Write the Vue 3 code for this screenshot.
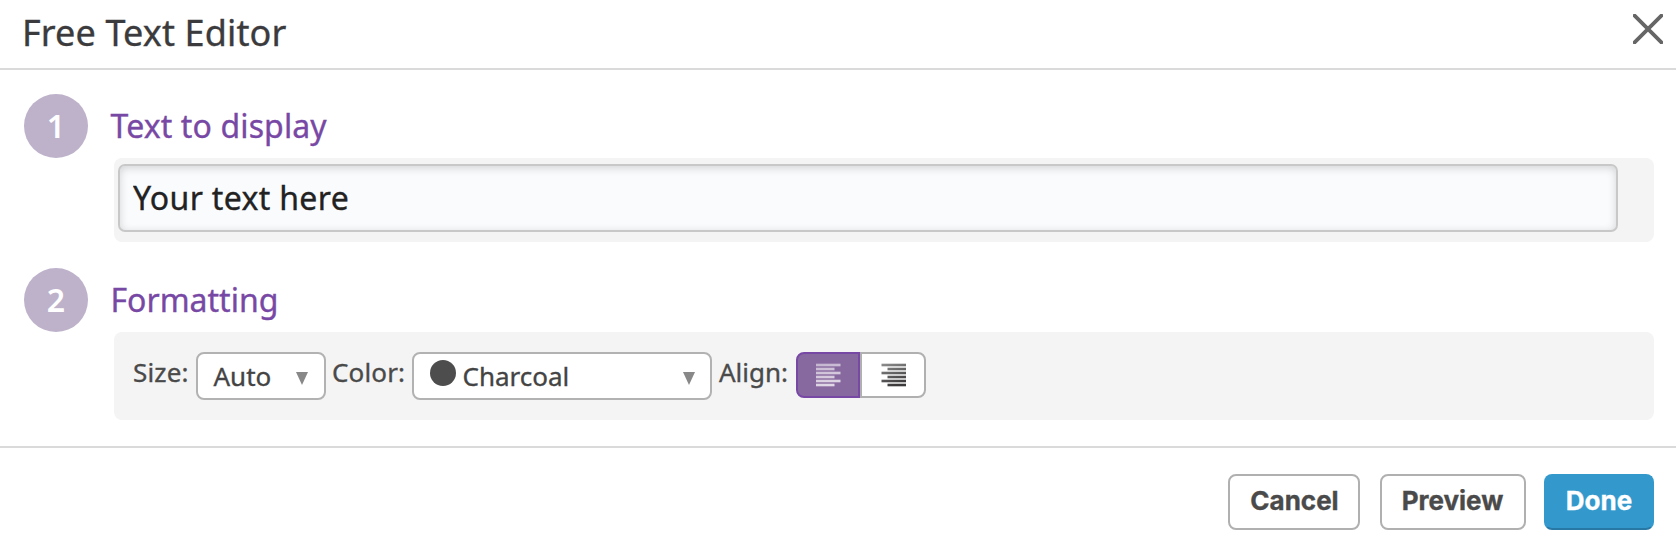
<script setup>
import { ref } from 'vue'

const text = ref('Your text here')
const align = ref('left')
const bars = [0, 4, 8, 12, 16, 20]
</script>

<template>
  <div class="dialog">
    <header class="head">
      <h1>Free Text Editor</h1>
      <button class="close" aria-label="Close">
        <svg width="30" height="30" viewBox="0 0 30 30">
          <path d="M1.6 1.6L28.4 28.4M28.4 1.6L1.6 28.4" stroke="#666" stroke-width="3.8" stroke-linecap="round" />
        </svg>
      </button>
    </header>

    <main class="body">
      <section class="step">
        <span class="num">1</span>
        <div class="content">
          <h2 class="spaced">Text to display</h2>
          <div class="panel text-panel">
            <input v-model="text" type="text" />
          </div>
        </div>
      </section>

      <section class="step second">
        <span class="num">2</span>
        <div class="content">
          <h2>Formatting</h2>
          <div class="panel format-panel">
            <span class="label size-label">Size:</span>
            <div class="select size">
              <span>Auto</span>
              <svg class="arrow" width="12" height="13" viewBox="0 0 12 13"><path d="M0 0H12L6 13Z" fill="#888" /></svg>
            </div>
            <span class="label color-label">Color:</span>
            <div class="select color">
              <i class="swatch"></i>
              <span>Charcoal</span>
              <svg class="arrow" width="12" height="13" viewBox="0 0 12 13"><path d="M0 0H12L6 13Z" fill="#888" /></svg>
            </div>
            <span class="label align-label">Align:</span>
            <div class="toggle">
              <button :class="{ on: align === 'left' }" aria-label="Left" @click="align = 'left'">
                <svg width="25" height="24" viewBox="0 0 25 24">
                  <defs>
                    <linearGradient id="light" gradientUnits="userSpaceOnUse" x1="0" y1="0" x2="4" y2="24">
                      <stop offset="0" stop-color="#c3b4cf" /><stop offset="1" stop-color="#e0d8e6" />
                    </linearGradient>
                  </defs>
                  <rect v-for="(y, i) in bars" :key="y" x="0" :y="y + 0.7" :width="i % 2 ? 18.5 : 24.5" height="2.6" fill="url(#light)" />
                </svg>
              </button>
              <button :class="{ on: align === 'right' }" aria-label="Right" @click="align = 'right'">
                <svg width="25" height="24" viewBox="0 0 25 24">
                  <defs>
                    <linearGradient id="dark" gradientUnits="userSpaceOnUse" x1="0" y1="0" x2="8" y2="24">
                      <stop offset="0" stop-color="#919191" /><stop offset="1" stop-color="#3c3a3a" />
                    </linearGradient>
                  </defs>
                  <rect v-for="(y, i) in bars" :key="y" :x="i % 2 ? 6.5 : 0.5" :y="y + 0.7" :width="i % 2 ? 18.5 : 24.5" height="2.6" fill="url(#dark)" />
                </svg>
              </button>
            </div>
          </div>
        </div>
      </section>
    </main>

    <footer class="foot">
      <button class="btn cancel">Cancel</button>
      <button class="btn preview">Preview</button>
      <button class="btn done">Done</button>
    </footer>
  </div>
</template>

<style>
body {
  margin: 0;
  background: #fff;
}
</style>

<style scoped>
.dialog,
.dialog * {
  box-sizing: border-box;
}
.dialog {
  height: 552px;
  overflow: hidden;
  background: #fff;
  font-family: "Noto Sans", sans-serif;
  color: #4a4a4a;
  -webkit-text-stroke: 0.35px currentColor;
}
h1,
h2 {
  margin: 0;
  font-weight: 400;
}
button {
  padding: 0;
  border: 0;
  background: none;
  font: inherit;
  color: inherit;
}
.head {
  display: flex;
  justify-content: space-between;
  align-items: flex-start;
  height: 70px;
  padding: 8px 13px 0 22px;
  border-bottom: 2px solid #dadada;
}
h1 {
  font-size: 36px;
  line-height: 50px;
  letter-spacing: 0.13px;
  color: #3b3b3d;
}
.close {
  display: flex;
  margin-top: 6px;
}
.body {
  height: 376px;
  padding: 24px 22px 0 24px;
}
.step {
  display: flex;
}
.second {
  margin-top: 26px;
}
.num {
  flex: none;
  width: 64px;
  height: 64px;
  border-radius: 50%;
  background: #beb2cb;
  color: #fff;
  font-size: 32px;
  font-weight: 600;
  line-height: 64px;
  text-align: center;
  -webkit-text-stroke: 0;
}
.content {
  flex: 1;
  margin-left: 22px;
}
h2 {
  height: 64px;
  padding-left: 0.5px;
  font-size: 32px;
  line-height: 64px;
  color: #7848a5;
}
.spaced {
  letter-spacing: 0.12px;
}
.panel {
  margin-left: 4px;
  border-radius: 8px;
  background: #f4f4f4;
}
.text-panel {
  height: 84px;
  padding: 6px 36px 0 4px;
}
input {
  display: block;
  width: 100%;
  height: 68px;
  padding: 0 13px 2px;
  border: 2px solid #c8c8c8;
  border-radius: 7px;
  outline: 0;
  background: #fafbfd;
  box-shadow: inset 0 2px 8px rgba(0, 0, 0, 0.16);
  font-family: inherit;
  font-size: 32px;
  letter-spacing: 0.33px;
  color: #222;
  -webkit-text-stroke: 0.35px currentColor;
}
.format-panel {
  display: flex;
  height: 88px;
  padding: 20px 0 0 19px;
  font-size: 26px;
}
.label {
  line-height: 40px;
  white-space: nowrap;
}
.size-label {
  width: 63px;
  letter-spacing: 0.15px;
}
.color-label {
  width: 80px;
  letter-spacing: 0.15px;
}
.align-label {
  width: 77px;
}
.select {
  display: flex;
  align-items: flex-start;
  height: 48px;
  border: 2px solid #b2b2b2;
  border-radius: 8px;
  background: #fff;
  line-height: 44px;
  color: #444;
}
.size {
  width: 130px;
  margin-right: 6px;
  padding: 0 16px 0 15.5px;
}
.color {
  width: 300px;
  margin-right: 7px;
  padding: 0 15px 0 16px;
}
.arrow {
  margin: 18px 0 0 auto;
}
.swatch {
  width: 26px;
  height: 26px;
  margin: 6px 6.5px 0 0;
  border-radius: 50%;
  background: #4d4d4d;
}
.toggle {
  display: flex;
  width: 130px;
  height: 46px;
}
.toggle button {
  display: flex;
  justify-content: center;
  width: 66px;
  padding-top: 9px;
  border: 2px solid #b0b0b0;
  border-radius: 0 8px 8px 0;
  background: #fff;
}
.toggle button:first-child {
  width: 64px;
  border-radius: 8px 0 0 8px;
}
.toggle button.on {
  border-color: #7848a5;
  background: #88699f;
}
.foot {
  display: flex;
  justify-content: flex-end;
  height: 106px;
  padding: 26px 22px 0 0;
  border-top: 2px solid #dadada;
}
.btn {
  height: 56px;
  padding-bottom: 2px;
  border: 2px solid #b0b0b0;
  border-radius: 8px;
  background: #fff;
  font-family: Inter, sans-serif;
  font-size: 26px;
  font-weight: 700;
  line-height: 48px;
  color: #4a4a4a;
}
.cancel {
  width: 132px;
  padding-left: 1px;
}
.preview {
  width: 146px;
  margin-left: 20px;
  padding-right: 1px;
}
.done {
  width: 110px;
  margin-left: 18px;
  border-color: #3399cc;
  border-bottom-color: #2878a5;
  background: #3399cc;
  color: #fff;
}
</style>
